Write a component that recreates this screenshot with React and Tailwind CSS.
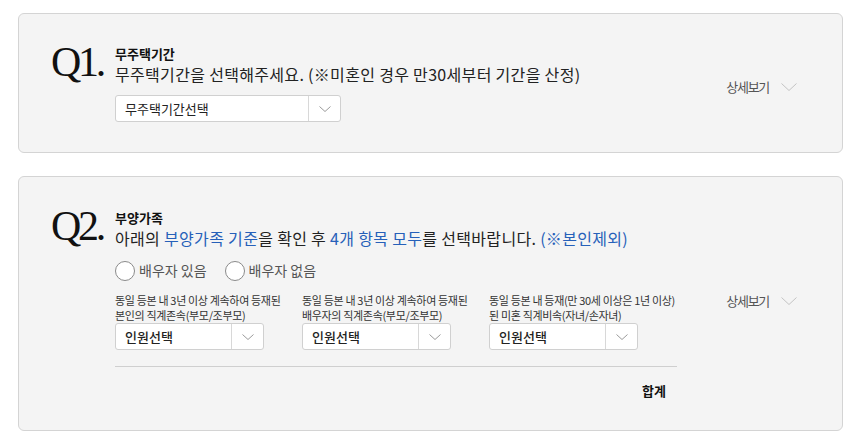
import React from "react";

const KR = { fontFamily: '"Noto Sans CJK KR", "Noto Sans", sans-serif' };

function Chevron({ w = 12, h = 6, color = "#9a9a9a" }) {
  return (
    <svg width={w} height={h} viewBox={`0 0 ${w} ${h}`} fill="none">
      <polyline points={`0.5,0.5 ${w / 2},${h - 0.5} ${w - 0.5},0.5`} stroke={color} strokeWidth="1" />
    </svg>
  );
}

function Select({ label, width, bold }) {
  return (
    <div
      className="flex h-[27px] items-stretch rounded-[3px] border border-[#d0d0d0] bg-white"
      style={{ width }}
    >
      <div className={`flex flex-1 items-center pl-[9px] text-[13px] text-[#222] ${bold ? "font-medium" : ""}`}>
        {label}
      </div>
      <div className="flex w-[32px] items-center justify-center border-l border-[#d8d8d8]">
        <Chevron />
      </div>
    </div>
  );
}

function Detail() {
  return (
    <div className="flex items-center gap-[12px] text-[13px] tracking-[-0.1em] text-[#555]">
      <span>상세보기</span>
      <Chevron w={16} h={8} color="#c4c4c4" />
    </div>
  );
}

function QMark({ n }) {
  return (
    <div
      className="w-[64px] shrink-0 text-[42px] leading-none tracking-[-0.08em] text-[#111] -mt-[4px]"
      style={{ fontFamily: '"Liberation Serif", "Times New Roman", serif' }}
    >
      Q{n}.
    </div>
  );
}

function Radio({ label }) {
  return (
    <div className="flex items-center gap-[4px]">
      <span className="h-[20px] w-[20px] rounded-full border border-[#8a8a8a] bg-white" />
      <span className="text-[14px] text-[#555]">{label}</span>
    </div>
  );
}

export default function App() {
  return (
    <div className="min-h-[445px] w-[864px] bg-white pt-[13px] pl-[18px]" style={KR}>
      {/* Card 1 */}
      <div className="flex w-[825px] items-center rounded-[6px] border border-[#d4d4d4] bg-[#f4f4f4] pt-[31px] pb-[30px] pl-[32px] pr-[45px]">
        <div className="flex flex-1 items-start">
          <QMark n={1} />
          <div className="flex flex-col">
            <div className="text-[13px] font-bold leading-[18px] text-[#111]">무주택기간</div>
            <div className="text-[16px] leading-[22px] tracking-[0.02em] text-[#222]">
              무주택기간을 선택해주세요. (※미혼인 경우 만30세부터 기간을 산정)
            </div>
            <div className="mt-[10px]">
              <Select label="무주택기간선택" width={226} />
            </div>
          </div>
        </div>
        <div className="mt-[6px]">
          <Detail />
        </div>
      </div>

      {/* Card 2 */}
      <div className="mt-[23px] flex w-[825px] items-center rounded-[6px] border border-[#d4d4d4] bg-[#f4f4f4] pt-[32px] pb-[30px] pl-[32px] pr-[45px]">
        <div className="flex flex-1 items-start">
          <QMark n={2} />
          <div className="flex w-[562px] flex-col">
            <div className="text-[13px] font-bold leading-[18px] text-[#111]">부양가족</div>
            <div className="text-[16px] leading-[22px] tracking-[0.02em] text-[#222]">
              아래의 <span className="text-[#2660b9]">부양가족 기준</span>을 확인 후{" "}
              <span className="text-[#2660b9]">4개 항목 모두</span>를 선택바랍니다.{" "}
              <span className="text-[#2660b9]">(※본인제외)</span>
            </div>
            <div className="mt-[11px] flex items-center gap-[18px]">
              <Radio label="배우자 있음" />
              <Radio label="배우자 없음" />
            </div>
            <div className="mt-[12px] grid grid-cols-[149px_149px_149px] gap-x-[38px]">
              {[
                ["동일 등본 내 3년 이상 계속하여 등재된", "본인의 직계존속(부모/조부모)"],
                ["동일 등본 내 3년 이상 계속하여 등재된", "배우자의 직계존속(부모/조부모)"],
                ["동일 등본 내 등재(만 30세 이상은 1년 이상)", "된 미혼 직계비속(자녀/손자녀)"],
              ].map(([a, b], i) => (
                <div key={i} className="flex flex-col">
                  <div className="whitespace-nowrap text-[11px] leading-[15px] tracking-[-0.03em] text-[#333]">
                    <div>{a}</div>
                    <div>{b}</div>
                  </div>
                  <div>
                    <Select label="인원선택" width={149} bold />
                  </div>
                </div>
              ))}
            </div>
            <div className="mt-[16px] h-px w-full bg-[#cfcfcf]" />
            <div className="mt-[15px] flex justify-end pr-[11px] text-[13px] font-bold leading-[18px] text-[#111]">
              합계
            </div>
          </div>
        </div>
        <div className="-mt-[8px]">
          <Detail />
        </div>
      </div>
    </div>
  );
}
